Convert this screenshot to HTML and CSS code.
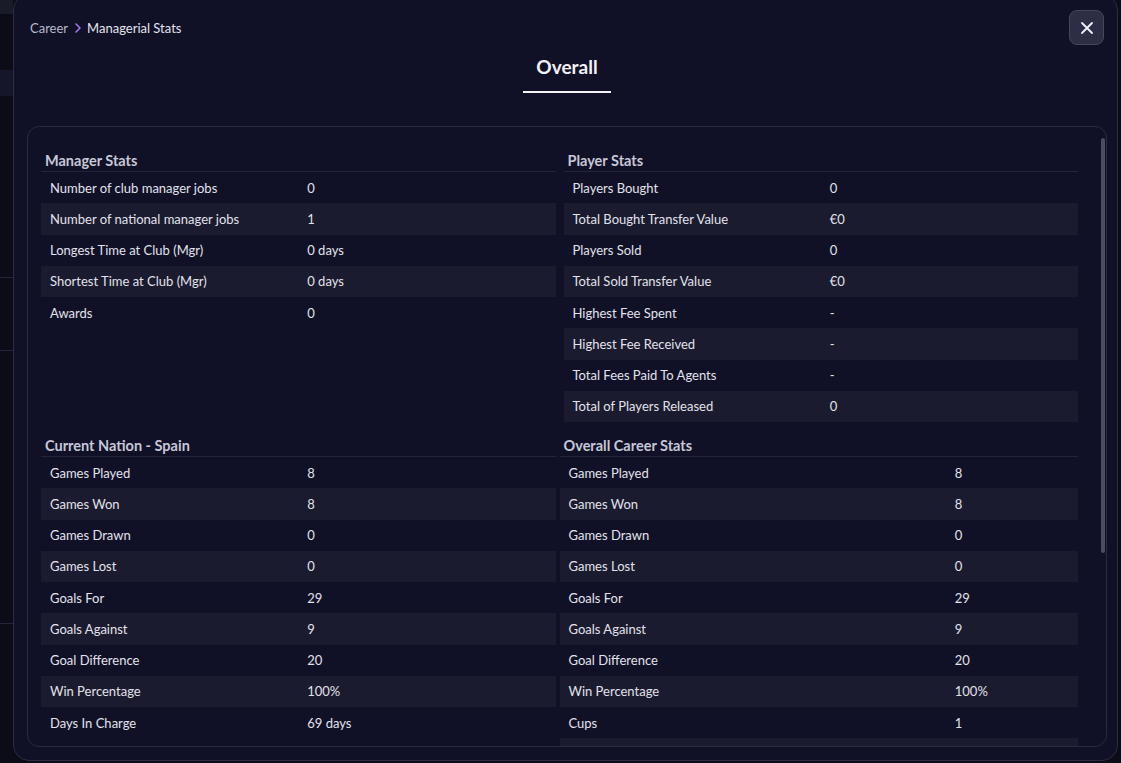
FILE: index.html
```html
<!DOCTYPE html>
<html lang="en">
<head>
    <meta charset="UTF-8">
    <meta name="viewport" content="width=device-width, initial-scale=1.0">
    <title>Managerial Stats</title>
    <link rel="stylesheet" href="styles.css">
</head>
<body>
    <div class="modal">
        <div class="modal-header">
            <div class="breadcrumb">
                <span class="crumb">Career</span>
                <svg class="crumb-sep" width="12" height="12" viewBox="0 0 12 12"><path d="M4 2 L8 6 L4 10" fill="none" stroke="currentColor" stroke-width="1.6" stroke-linecap="round" stroke-linejoin="round"/></svg>
                <span class="crumb current">Managerial Stats</span>
            </div>
            <button type="button" class="close-btn" aria-label="Close">
                <svg width="14" height="14" viewBox="0 0 14 14"><path d="M2 2 L12 12 M12 2 L2 12" stroke="currentColor" stroke-width="1.8" stroke-linecap="round"/></svg>
            </button>
        </div>

        <div class="tabs">
            <div class="tab active">Overall</div>
        </div>

        <div class="panel">
            <div class="scroll-thumb"></div>
            <div class="panel-content">
                <div class="stats-grid">
                    <section class="stats-block">
                        <h3 class="block-title">Manager Stats</h3>
                        <div class="stat-row"><span>Number of club manager jobs</span><span>0</span></div>
                        <div class="stat-row"><span>Number of national manager jobs</span><span>1</span></div>
                        <div class="stat-row"><span>Longest Time at Club (Mgr)</span><span>0 days</span></div>
                        <div class="stat-row"><span>Shortest Time at Club (Mgr)</span><span>0 days</span></div>
                        <div class="stat-row"><span>Awards</span><span>0</span></div>
                    </section>
                    <section class="stats-block">
                        <h3 class="block-title">Player Stats</h3>
                        <div class="stat-row"><span>Players Bought</span><span>0</span></div>
                        <div class="stat-row"><span>Total Bought Transfer Value</span><span>€0</span></div>
                        <div class="stat-row"><span>Players Sold</span><span>0</span></div>
                        <div class="stat-row"><span>Total Sold Transfer Value</span><span>€0</span></div>
                        <div class="stat-row"><span>Highest Fee Spent</span><span>-</span></div>
                        <div class="stat-row"><span>Highest Fee Received</span><span>-</span></div>
                        <div class="stat-row"><span>Total Fees Paid To Agents</span><span>-</span></div>
                        <div class="stat-row"><span>Total of Players Released</span><span>0</span></div>
                    </section>
                </div>

                <div class="stats-grid lower">
                    <section class="stats-block">
                        <h3 class="block-title">Current Nation - Spain</h3>
                        <div class="stat-row"><span>Games Played</span><span>8</span></div>
                        <div class="stat-row"><span>Games Won</span><span>8</span></div>
                        <div class="stat-row"><span>Games Drawn</span><span>0</span></div>
                        <div class="stat-row"><span>Games Lost</span><span>0</span></div>
                        <div class="stat-row"><span>Goals For</span><span>29</span></div>
                        <div class="stat-row"><span>Goals Against</span><span>9</span></div>
                        <div class="stat-row"><span>Goal Difference</span><span>20</span></div>
                        <div class="stat-row"><span>Win Percentage</span><span>100%</span></div>
                        <div class="stat-row"><span>Days In Charge</span><span>69 days</span></div>
                    </section>
                    <section class="stats-block wide-label">
                        <h3 class="block-title">Overall Career Stats</h3>
                        <div class="stat-row"><span>Games Played</span><span>8</span></div>
                        <div class="stat-row"><span>Games Won</span><span>8</span></div>
                        <div class="stat-row"><span>Games Drawn</span><span>0</span></div>
                        <div class="stat-row"><span>Games Lost</span><span>0</span></div>
                        <div class="stat-row"><span>Goals For</span><span>29</span></div>
                        <div class="stat-row"><span>Goals Against</span><span>9</span></div>
                        <div class="stat-row"><span>Goal Difference</span><span>20</span></div>
                        <div class="stat-row"><span>Win Percentage</span><span>100%</span></div>
                        <div class="stat-row"><span>Cups</span><span>1</span></div>
                        <div class="stat-row"></div>
                    </section>
                </div>
            </div>
        </div>
    </div>
</body>
</html>
```

FILE: styles.css
```css
body {
    margin: 0;
    height: 763px;
    overflow: hidden;
    font-family: Lato, "Liberation Sans", sans-serif;
    color: #e2e2ec;
    background-color: #0b0c18;
    background-image:
        linear-gradient(#1a1b29, #1a1b29),
        linear-gradient(#15162a, #15162a),
        linear-gradient(#23243a, #23243a),
        linear-gradient(#23243a, #23243a),
        linear-gradient(#23243a, #23243a);
    background-repeat: no-repeat;
    background-size: 13px 14px, 13px 26px, 13px 1px, 13px 1px, 13px 1px;
    background-position: 0 0, 0 70px, 0 277px, 0 350px, 0 623px;
}

.modal {
    box-sizing: border-box;
    width: 1105px;
    height: 767px;
    margin: -6px 0 0 13px;
    padding: 15px 13px 0 16px;
    background-color: #101126;
    border: 1px solid #2c2d41;
    border-radius: 16px;
}

.modal-header {
    display: flex;
    justify-content: space-between;
    align-items: center;
    height: 35px;
}

.breadcrumb {
    display: flex;
    align-items: center;
    gap: 4px;
    font-size: 13px;
}

.crumb {
    color: #b8b9c9;
}

.crumb.current {
    margin-left: -1px;
    color: #e4e4ee;
}

.crumb-sep {
    color: #9a78f2;
}

.close-btn {
    display: flex;
    align-items: center;
    justify-content: center;
    width: 35px;
    height: 35px;
    padding: 0;
    border: 1px solid #46475c;
    border-radius: 8px;
    background-color: #2d2e45;
    color: #f2f2f8;
    cursor: pointer;
}

.tabs {
    display: flex;
    justify-content: center;
    margin-top: 10px;
}

.tab {
    padding: 0 13px 12px;
    font-size: 19px;
    font-weight: 700;
    line-height: 24px;
    color: #f2f2f8;
    border-bottom: 2px solid #f4f4f8;
}

.panel {
    position: relative;
    box-sizing: border-box;
    height: 621px;
    margin: 33px -3px 0 -3px;
    border: 1px solid #2a2b3e;
    border-radius: 12px;
    overflow: hidden;
}

.panel-content {
    padding: 24px 28px 0 13px;
}

.scroll-thumb {
    position: absolute;
    top: 11px;
    right: 1px;
    width: 4px;
    height: 415px;
    border-radius: 2px;
    background-color: #4b4c61;
}

.stats-grid {
    display: grid;
    grid-template-columns: 1fr 1fr;
    column-gap: 8px;
    align-items: start;
}

.stats-grid.lower {
    grid-template-columns: calc(50% - 4px) 1fr;
    column-gap: 4px;
    margin-top: 14px;
}

.block-title {
    margin: 0;
    padding-left: 4px;
    font-size: 14.5px;
    font-weight: 700;
    line-height: 20px;
    color: #c6c7d7;
    border-bottom: 1px solid #232438;
}

.stat-row {
    display: grid;
    grid-template-columns: 50% 50%;
    align-items: center;
    height: 31.25px;
    font-size: 13px;
}

.stat-row span {
    padding-left: 9px;
}

.stat-row:nth-of-type(even) {
    background-color: #1a1b2e;
}

.wide-label .stat-row {
    grid-template-columns: 74.5% 25.5%;
}
```
